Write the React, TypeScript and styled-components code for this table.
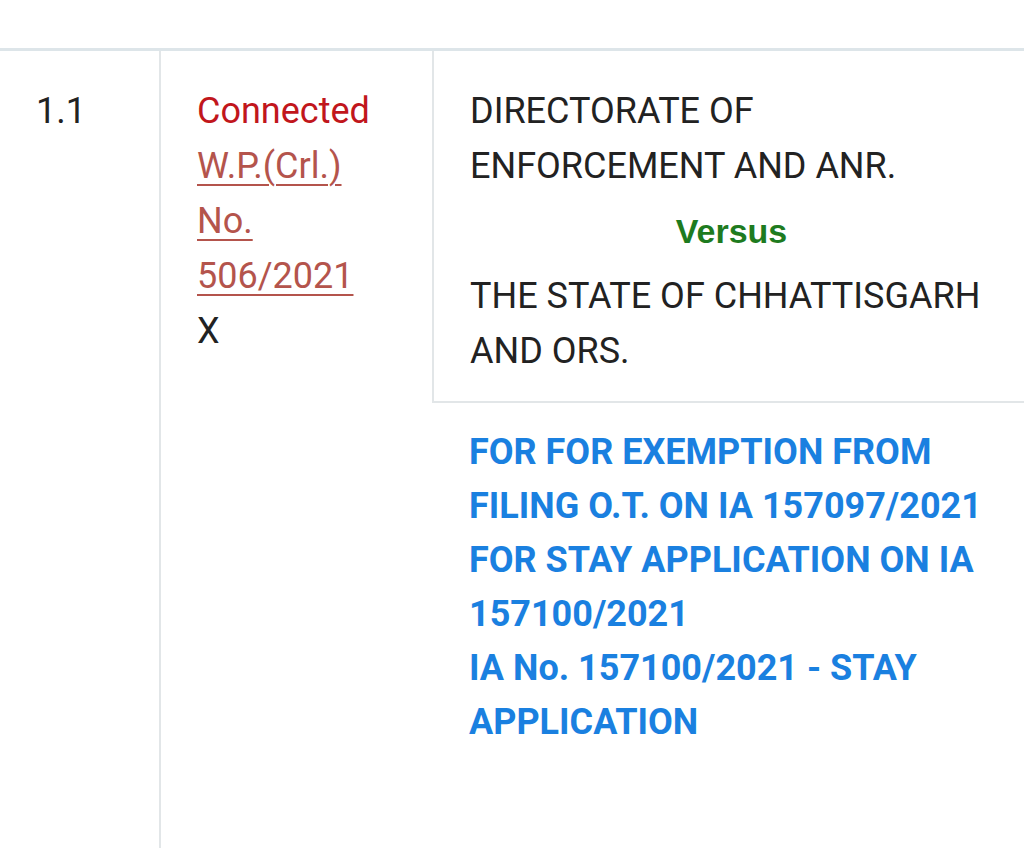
import * as React from 'react';
import styled, {createGlobalStyle} from 'styled-components';

const GlobalStyle = createGlobalStyle`
  html, body {
    margin: 0;
    padding: 0;
    background: #ffffff;
    overflow: hidden;
  }
  body {
    font-family: Roboto, "Noto Sans", sans-serif;
  }
`;

const Page = styled.div`
  width: 1024px;
  height: 848px;
  overflow: hidden;
  padding-top: 48px;
  box-sizing: border-box;
`;

const Table = styled.table`
  width: 1026px;
  border-collapse: collapse;
  table-layout: fixed;
  font-size: 36px;
  line-height: 55px;
  color: #222222;
  border-top: 3px solid #dde5e9;
`;

const Cell = styled.td<{$width?: number}>`
  ${p => (p.$width ? `width: ${p.$width}px;` : '')}
  vertical-align: top;
  padding: 33px 40px 22px 36px;
  border-left: 2px solid #e2e6e8;
  box-sizing: border-box;
  &:first-child {
    border-left: none;
  }
`;

const IssueCell = styled(Cell)`
  padding-top: 22px;
  height: 520px;
  border-top: 2px solid #e2e6e8;
`;

const Connected = styled.div`
  color: #c1161c;
`;

const CaseLink = styled.a`
  color: #b4544c;
  text-decoration: underline;
  text-decoration-thickness: 2px;
  text-underline-offset: 6px;
  display: block;
`;

const Party = styled.div``;

const Versus = styled.div`
  text-align: center;
  color: #1e7b1f;
  font-family: "Liberation Sans", Arial, sans-serif;
  font-size: 34px;
  font-weight: 700;
  line-height: 75px;
  padding-left: 7px;
`;

const IssueLine = styled.div`
  color: #1a80e0;
  font-weight: 700;
  line-height: 54px;
`;

export default function App() {
  return (
    <Page>
      <GlobalStyle />
      <Table>
        <tbody>
          <tr>
            <Cell $width={160} rowSpan={2}>1.1</Cell>
            <Cell $width={273} rowSpan={2}>
              <Connected>Connected</Connected>
              <CaseLink href='#'>W.P.(Crl.)</CaseLink>
              <CaseLink href='#'>No.</CaseLink>
              <CaseLink href='#'>506/2021</CaseLink>
              <div>X</div>
            </Cell>
            <Cell>
              <Party>DIRECTORATE OF ENFORCEMENT AND ANR.</Party>
              <Versus>Versus</Versus>
              <Party>THE STATE OF CHHATTISGARH AND ORS.</Party>
            </Cell>
          </tr>
          <tr>
            <IssueCell>
              <IssueLine>FOR FOR EXEMPTION FROM FILING O.T. ON IA 157097/2021</IssueLine>
              <IssueLine>FOR STAY APPLICATION ON IA 157100/2021</IssueLine>
              <IssueLine>IA No. 157100/2021 - STAY APPLICATION</IssueLine>
            </IssueCell>
          </tr>
        </tbody>
      </Table>
    </Page>
  );
}
